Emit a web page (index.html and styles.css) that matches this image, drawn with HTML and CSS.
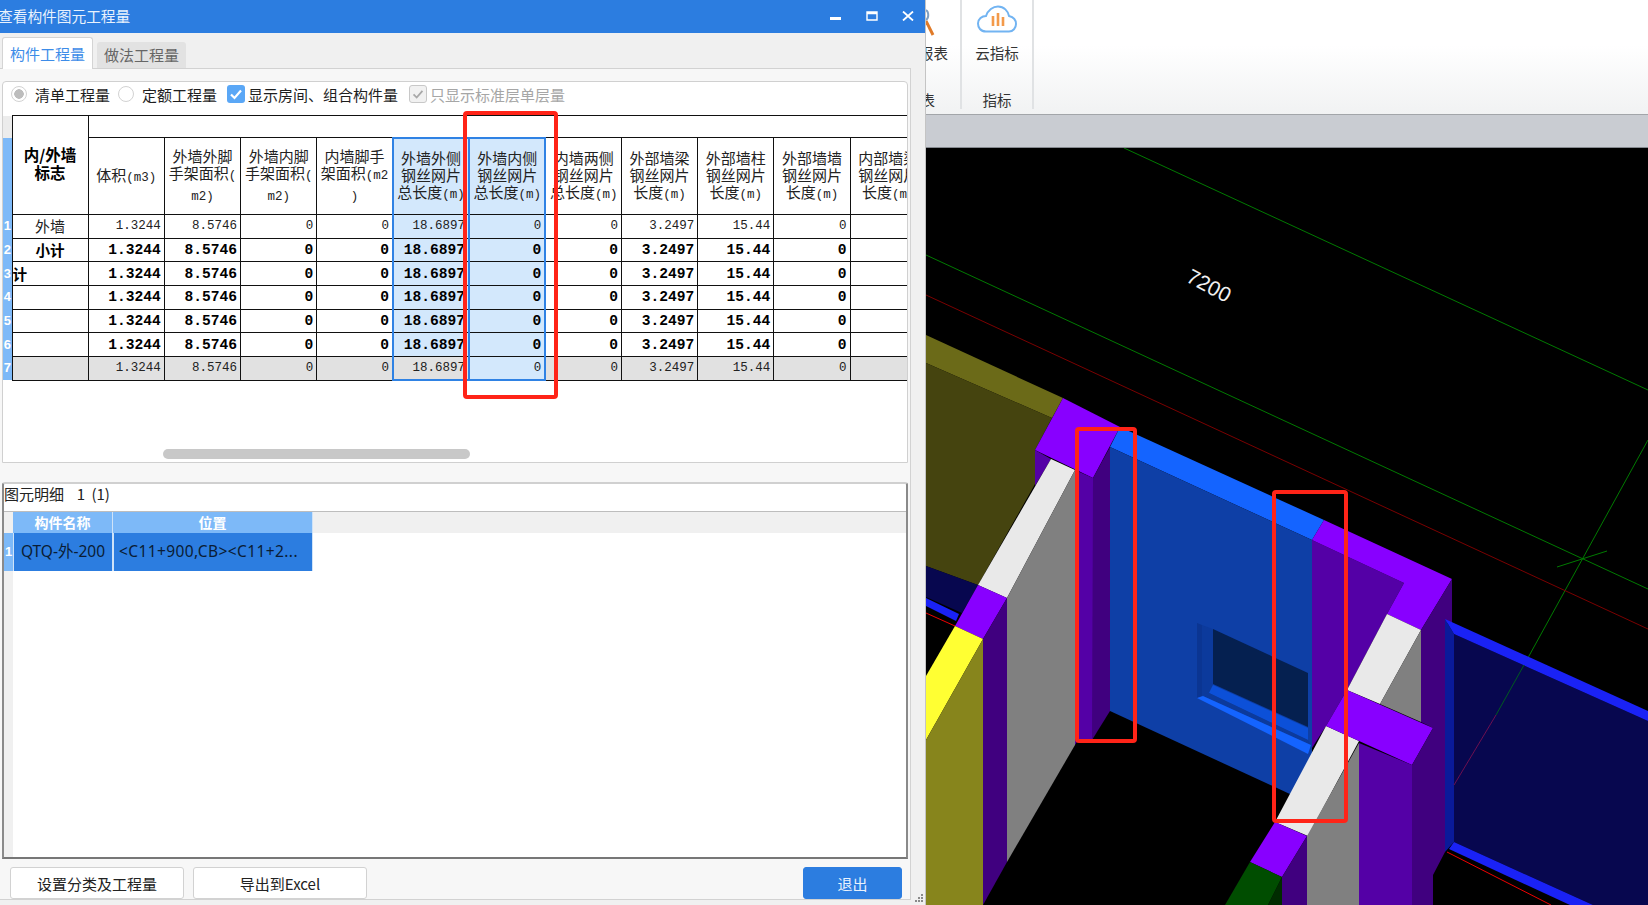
FILE: index.html
```html
<!DOCTYPE html>
<html lang="zh-CN">
<head>
<meta charset="utf-8">
<title>查看构件图元工程量</title>
<link rel="stylesheet" href="styles.css">
</head>
<body>
<div class="app">
  <section class="dialog">
    <header class="titlebar">
      <span class="title">查看构件图元工程量</span>
      <div class="winbtns">
        <svg class="winbtn" viewBox="0 0 12 10"><rect x="0" y="6" width="11" height="3" fill="#fff"/></svg>
        <svg class="winbtn" viewBox="0 0 12 10"><path d="M1 1h10v8H1z M1 2.5h10" fill="none" stroke="#fff" stroke-width="1.4"/></svg>
        <svg class="winbtn" viewBox="0 0 12 10"><path d="M1 0.5L11 9.5M11 0.5L1 9.5" fill="none" stroke="#fff" stroke-width="1.8"/></svg>
      </div>
    </header>
    <nav class="tabs">
      <div class="tab tab-on">构件工程量</div>
      <div class="tab">做法工程量</div>
    </nav>
    <div class="pane">
      <div class="group upper">
        <div class="options">
          <span class="radio radio-on"></span><span class="optlabel lab1">清单工程量</span>
          <span class="radio"></span><span class="optlabel lab2">定额工程量</span>
          <span class="check check-on"><svg viewBox="0 0 18 18"><path d="M4 9.5l3.5 3.5L14 5.5" fill="none" stroke="#fff" stroke-width="2.2"/></svg></span><span class="optlabel lab3">显示房间、组合构件量</span>
          <span class="check check-off"><svg viewBox="0 0 18 18"><path d="M4 9.5l3.5 3.5L14 5.5" fill="none" stroke="#a8a8a8" stroke-width="2"/></svg></span><span class="optlabel lab4">只显示标准层单层量</span>
        </div>
        <div class="tableclip">
          <table class="qty">
            <colgroup>
              <col class="c-num"><col class="c-col"><col class="c-col"><col class="c-col"><col class="c-col"><col class="c-col"><col class="c-col"><col class="c-col"><col class="c-col"><col class="c-col"><col class="c-col"><col class="c-col"><col class="c-col">
            </colgroup>
            <thead>
              <tr class="h1">
                <th class="num num-grey"></th>
                <th class="flag" rowspan="2">内/外墙<br>标志</th>
                <th class="blank" colspan="11"></th>
              </tr>
              <tr class="h2">
                <th class="num"></th>
                <th>体积<span class="lat">(m3)</span></th>
                <th>外墙外脚<br>手架面积<span class="lat">(</span><br><span class="lat">m2)</span></th>
                <th>外墙内脚<br>手架面积<span class="lat">(</span><br><span class="lat">m2)</span></th>
                <th>内墙脚手<br>架面积<span class="lat">(m2</span><br><span class="lat">)</span></th>
                <th class="sel">外墙外侧<br>钢丝网片<br>总长度<span class="lat">(m)</span></th>
                <th class="sel">外墙内侧<br>钢丝网片<br>总长度<span class="lat">(m)</span></th>
                <th>内墙两侧<br>钢丝网片<br>总长度<span class="lat">(m)</span></th>
                <th>外部墙梁<br>钢丝网片<br>长度<span class="lat">(m)</span></th>
                <th>外部墙柱<br>钢丝网片<br>长度<span class="lat">(m)</span></th>
                <th>外部墙墙<br>钢丝网片<br>长度<span class="lat">(m)</span></th>
                <th>内部墙梁<br>钢丝网片<br>长度<span class="lat">(m)</span></th>
              </tr>
            </thead>
            <tbody>
              <tr>
                <td class="num">1</td><td class="name">外墙</td><td>1.3244</td><td>8.5746</td><td>0</td><td>0</td><td class="sel">18.6897</td><td class="sel">0</td><td>0</td><td>3.2497</td><td>15.44</td><td>0</td><td></td>
              </tr>
              <tr class="bold">
                <td class="num">2</td><td class="name">小计</td><td>1.3244</td><td>8.5746</td><td>0</td><td>0</td><td class="sel">18.6897</td><td class="sel">0</td><td>0</td><td>3.2497</td><td>15.44</td><td>0</td><td></td>
              </tr>
              <tr class="bold">
                <td class="num">3</td><td class="name name-left">计</td><td>1.3244</td><td>8.5746</td><td>0</td><td>0</td><td class="sel">18.6897</td><td class="sel">0</td><td>0</td><td>3.2497</td><td>15.44</td><td>0</td><td></td>
              </tr>
              <tr class="bold">
                <td class="num">4</td><td class="name"></td><td>1.3244</td><td>8.5746</td><td>0</td><td>0</td><td class="sel">18.6897</td><td class="sel">0</td><td>0</td><td>3.2497</td><td>15.44</td><td>0</td><td></td>
              </tr>
              <tr class="bold">
                <td class="num">5</td><td class="name"></td><td>1.3244</td><td>8.5746</td><td>0</td><td>0</td><td class="sel">18.6897</td><td class="sel">0</td><td>0</td><td>3.2497</td><td>15.44</td><td>0</td><td></td>
              </tr>
              <tr class="bold">
                <td class="num">6</td><td class="name"></td><td>1.3244</td><td>8.5746</td><td>0</td><td>0</td><td class="sel">18.6897</td><td class="sel">0</td><td>0</td><td>3.2497</td><td>15.44</td><td>0</td><td></td>
              </tr>
              <tr class="total">
                <td class="num">7</td><td class="name"></td><td>1.3244</td><td>8.5746</td><td>0</td><td>0</td><td class="sel sel-grey">18.6897</td><td class="sel">0</td><td>0</td><td>3.2497</td><td>15.44</td><td>0</td><td></td>
              </tr>
            </tbody>
          </table>
        </div>
        <div class="hscroll"><div class="thumb"></div></div>
        <div class="redbox"></div>
      </div>
      <div class="group lower">
        <div class="lowertitle">图元明细&nbsp; 1 (1)</div>
        <div class="detail">
          <div class="d-corner"></div>
          <div class="d-head d-name">构件名称</div>
          <div class="d-head d-pos">位置</div>
          <div class="d-rest"></div>
          <div class="d-num">1</div>
          <div class="d-cell d-name">QTQ-外-200</div>
          <div class="d-cell d-pos">&lt;C11+900,CB&gt;&lt;C11+2...</div>
          <div class="d-blank"></div>
          <div class="d-strip"></div>
          <div class="d-empty"></div>
        </div>
      </div>
      <footer class="footer">
        <button class="btn btn-a">设置分类及工程量</button>
        <button class="btn btn-a">导出到Excel</button>
        <button class="btn btn-exit">退出</button>
      </footer>
    </div>
    <svg class="grip" viewBox="0 0 12 10"><path d="M9 1h2v2H9zM6 4h2v2H6zM9 4h2v2H9zM3 7h2v2H3zM6 7h2v2H6zM9 7h2v2H9z" fill="#8a8a8a"/></svg>
  </section>

  <section class="main">
    <div class="ribbon">
      <div class="rgroup rg1">
        <svg class="mag" viewBox="0 0 10 40"><path d="M0 10C3 12 3 18 0 20" fill="none" stroke="#7f9fc0" stroke-width="2"/><path d="M0 21L7 35" fill="none" stroke="#e07a28" stroke-width="3"/></svg>
        <div class="rbig rbig1">报表</div>
        <div class="rlabel rlabel1">表</div>
      </div>
      <div class="rgroup rg2">
        <svg class="cloud" viewBox="0 0 40 28">
          <path d="M9 26.5C3.5 26.5 1 22.5 1 18.5C1 14 5 11 9 11C11 5 16 1.5 21 1.5C27 1.5 31 6 32 11C36 12 39 15 39 19C39 23 36 26.5 32 26.5Z" fill="none" stroke="#72b4f2" stroke-width="2"/>
          <path d="M16 11v10M21 8v13M26 12v9" fill="none" stroke="#f39a4a" stroke-width="2.6"/>
        </svg>
        <div class="rbig">云指标</div>
        <div class="rlabel">指标</div>
      </div>
    </div>
    <div class="band"></div>
    <svg class="scene" viewBox="926 148 722 757">
      <rect class="k" x="926" y="148" width="722" height="757"/>
      <path class="ln-g" d="M1124 148L1648 390M926 255L1648 589M1648 440L1524 665M1557 567L1607 551"/>
      <path class="ln-r" d="M926 295L1648 629"/>
      <text class="dim" transform="translate(1185 281) rotate(28)">7200</text>

      <polygon class="olive-top" points="926,335 1063,398 1052,418 926,363"/>
      <polygon class="olive-dk" points="926,363 1052,418 1035,450 1035,484 978,585 926,566"/>
      <polygon class="navy" points="926,566 978,585 962,613 926,597"/>
      <polygon class="bar" points="926,598 959,614 956,621 926,606"/>
      <path class="ln-rb" d="M926 613L955 626"/>

      <polygon class="p-top" points="1063,398 1120,427 1093,478 1035,450"/>
      <polygon class="p-mid" points="1035,450 1051,459 1035,486"/>
      <polygon class="white" points="1051,459 1075,470 1007,598 978,585"/>
      <polygon class="grey" points="1075,470 1075,745 1007,862 1007,598"/>
      <polygon class="p-mid" points="1075,470 1093,478 1093,740 1078,740 1075,745"/>
      <polygon class="p-dk" points="1093,478 1110,447 1110,711 1092,740"/>
      <polygon class="p-top" points="978,585 1007,598 983,639 955,626"/>
      <polygon class="p-dk" points="983,639 1007,598 1007,862 983,905"/>
      <polygon class="yellow" points="955,626 983,639 926,740 926,676"/>
      <polygon class="olive" points="983,639 983,905 926,905 926,740"/>

      <polygon class="b-top" points="1120,427 1324,520 1312,540 1110,447"/>
      <polygon class="wall" points="1110,447 1312,540 1312,760 1292,795 1110,711"/>
      <polygon class="frame-dk" points="1197,623 1202,625 1202,696 1197,698"/>
      <polygon class="frame" points="1202,625 1213,629 1213,684 1209,693 1202,696"/>
      <polygon class="win" points="1213,629 1308,673 1308,727 1213,684"/>
      <polygon class="sill-in" points="1213,685 1308,728 1308,740 1209,693"/>
      <polygon class="frame" points="1209,693 1308,740 1311,745 1203,696"/>
      <polygon class="sill" points="1197,698 1203,696 1311,745 1308,754"/>

      <polygon class="p-mid" points="1312,540 1404,583 1387,614 1347,690 1326,726 1312,748"/>
      <polygon class="p-top" points="1324,520 1452,579 1421,630 1387,614 1404,583 1312,540"/>
      <polygon class="white" points="1387,614 1421,630 1380,704 1347,690"/>
      <polygon class="grey" points="1421,630 1421,722 1380,704"/>
      <polygon class="p-dk" points="1421,630 1452,579 1452,625 1445,622 1445,852 1433,875 1433,728 1421,722"/>

      <polygon class="navy" points="1454,634 1648,721 1648,905 1593,905 1454,842"/>
      <polygon class="fr2" points="1445,619 1454,634 1454,842 1445,852"/>
      <polygon class="bar" points="1445,619 1648,711 1648,721 1454,634"/>
      <polygon class="bar" points="1454,842 1593,905 1570,905 1449,849"/>
      <path class="ln-rb" d="M1447 852L1551 905"/>
      <path class="ln-g2" d="M1524 665L1496 715"/>
      <path class="ln-m" d="M1496 715L1454 785"/>

      <polygon class="white" points="1326,726 1359,741 1308,836 1275,822"/>
      <polygon class="p-top" points="1347,690 1433,728 1412,765 1326,726"/>
      <polygon class="grey" points="1359,743 1359,905 1307,905 1307,836"/>
      <polygon class="p-mid" points="1359,743 1412,765 1412,905 1359,905"/>
      <polygon class="p-dk" points="1412,765 1433,728 1433,905 1412,905"/>
      <polygon class="p-top" points="1275,822 1307,836 1282,877 1250,862"/>
      <polygon class="green" points="1250,862 1282,877 1268,905 1225,905"/>
      <polygon class="green-dk" points="1282,877 1282,905 1268,905"/>
      <polygon class="p-dk" points="1282,877 1307,836 1307,905 1282,905"/>

      <rect class="mark" x="1077" y="429" width="58" height="312" rx="2"/>
      <rect class="mark" x="1274" y="492" width="72" height="329" rx="2"/>
    </svg>
  </section>
</div>
</body>
</html>
```

FILE: styles.css
```css
* { box-sizing: border-box; }
html, body { margin: 0; padding: 0; }
body {
  width: 1648px;
  height: 905px;
  overflow: hidden;
  font-family: "Noto Sans CJK SC", "Liberation Sans", sans-serif;
  font-size: 15px;
  color: #222;
}
.app { display: flex; width: 1648px; height: 905px; }

/* dialog */
.dialog {
  position: relative;
  flex: 0 0 926px;
  height: 905px;
  background: #f0f0f0;
  display: flex;
  flex-direction: column;
  border-right: 1px solid #c4c4c4;
}
.titlebar {
  flex: 0 0 33px;
  background: #2c7de0;
  color: #e9f2fd;
  display: flex;
  align-items: center;
  justify-content: space-between;
}
.title { font-size: 14.7px; margin-left: -2px; margin-top: -2px; white-space: nowrap; }
.winbtns { display: flex; gap: 24px; padding-right: 11px; margin-top: -1px; }
.winbtn { width: 12px; height: 10px; display: block; }
.tabs {
  flex: 0 0 35px;
  display: flex;
  align-items: flex-end;
  gap: 4px;
  padding-left: 2px;
}
.tab {
  width: 89px;
  height: 26px;
  background: #e2e2e2;
  color: #666;
  text-align: center;
  line-height: 26px;
  border-radius: 3px 3px 0 0;
}
.tab-on {
  width: 91px;
  height: 32px;
  margin-bottom: -1px;
  line-height: 31px;
  color: #3d8ce8;
  background: #fff;
  border: 1px solid #d4d4d4;
  border-bottom: 0;
  position: relative;
}
.pane {
  flex: 0 0 832px;
  width: 911px;
  background: #f7f7f7;
  border: 1px solid #d2d2d2;
  border-left: 0;
  padding: 12px 2px 0 3px;
  display: flex;
  flex-direction: column;
}
.group { background: #fff; border: 1px solid #d0d0d0; }
.upper {
  position: relative;
  flex: 0 0 382px;
  border-radius: 4px 4px 0 0;
  margin-left: -1px;
  display: flex;
  flex-direction: column;
}
.options {
  flex: 0 0 33px;
  display: flex;
  align-items: center;
  padding-bottom: 9px;
  white-space: nowrap;
}
.radio {
  width: 16px;
  height: 16px;
  border: 1px solid #d2d2d2;
  border-radius: 50%;
  background: #fff;
  margin-left: 8px;
  flex: none;
  position: relative;
}
.radio-on { background: radial-gradient(circle, #bdbdbd 0 4.5px, #fff 5px); margin-left: 8px; }
.optlabel { color: #1e1e1e; }
.lab1 { margin-left: 8px; }
.lab2 { margin-left: 8px; }
.lab3 { margin-left: 3px; }
.lab4 { margin-left: 3px; color: #a6a6a6; }
.check {
  flex: none;
  width: 18px;
  height: 18px;
  border-radius: 3px;
  margin-left: 10px;
  display: block;
}
.check svg { display: block; width: 18px; height: 18px; }
.check-on { background: #5aa7f6; }
.check-off { background: #f1f1f1; border: 1px solid #c8c8c8; margin-left: 11px; }
.check-off svg { width: 16px; height: 16px; }

.tableclip { flex: 0 0 334px; overflow: hidden; }
.qty {
  border-collapse: collapse;
  table-layout: fixed;
  width: 924px;
  font-family: "Liberation Mono", "Noto Sans CJK SC", monospace;
}
.c-num { width: 9px; }
.c-col { width: 76.2px; }
.qty th, .qty td {
  border: 1px solid #111;
  padding: 0;
  overflow: hidden;
  white-space: nowrap;
}
.qty th {
  font-family: "Noto Sans CJK SC", sans-serif;
  font-size: 15px;
  font-weight: 400;
  line-height: 17px;
  text-align: center;
  color: #222;
}
.lat { font-family: "Liberation Mono", monospace; font-size: 12.5px; }
.qty .flag { font-weight: 700; font-size: 15.5px; padding-bottom: 4px; line-height: 18px; color: #000; }
.h1 { height: 22px; }
.h2 { height: 77px; }
.qty tbody tr { height: 23.7px; }
.qty td {
  font-size: 12.5px;
  line-height: 16px;
  text-align: right;
  padding-right: 3px;
  color: #222;
}
.qty .bold td { font-size: 14.6px; font-weight: 700; color: #000; }
.qty .name {
  font-family: "Noto Sans CJK SC", sans-serif;
  font-size: 15px;
  text-align: center;
  padding-right: 0;
}
.qty .name-left { text-align: left; }
.qty .total td { background: #e1e1e1; }
.qty th.num, .qty td.num {
  border: 0;
  background: #7db9f8;
  color: #fff;
  font-family: "Liberation Sans", sans-serif;
  font-size: 13px;
  font-weight: 700;
  text-align: center;
  padding: 0;
}
.qty th.num-grey { background: #ececec; }
.qty th.sel, .qty td.sel {
  background: #d3e8fc;
  border-left: 2px solid #2f82e4;
  border-right: 2px solid #2f82e4;
}
.qty th.sel { border-top: 2px solid #2f82e4; }
.qty .total td.sel { border-bottom: 2px solid #2f82e4; }
.qty .total td.sel-grey { background: #e1e1e1; }

.hscroll { flex: 0 0 10px; padding-left: 160px; }
.thumb { width: 307px; height: 10px; background: #c8c8c8; border-radius: 5px; }
.redbox {
  position: absolute;
  left: 460px;
  top: 29px;
  width: 95px;
  height: 288px;
  border: 4px solid #ff2418;
  border-radius: 4px;
}

.lower {
  flex: 0 0 377px;
  margin-top: 19px;
  margin-left: -1px;
  border-top: 2px solid #d0d0d0;
  border-bottom: 2px solid #777;
  border-left: 2px solid #8a8a8a;
  border-right: 2px solid #8a8a8a;
  border-radius: 3px 3px 0 0;
  display: flex;
  flex-direction: column;
}
.lowertitle {
  flex: 0 0 28px;
  line-height: 19px;
  font-size: 15px;
  white-space: nowrap;
  word-spacing: 3px;
  border-bottom: 1px solid #bdbdbd;
}
.detail {
  flex: 1;
  display: grid;
  grid-template-columns: 9px 100px 200px 1fr;
  grid-template-rows: 21px 38px 1fr;
  background: #fff;
}
.d-corner, .d-rest, .d-strip { background: #f0f0f0; }
.d-head {
  background: #7db9f8;
  color: #fff;
  font-weight: 700;
  font-size: 14px;
  text-align: center;
  line-height: 20px;
  border-right: 1px solid #cfe3f8;
}
.d-num {
  background: #7db9f8;
  color: #fff;
  font-family: "Liberation Sans", sans-serif;
  font-weight: 700;
  font-size: 13px;
  line-height: 37px;
  text-align: center;
}
.d-cell {
  background: #2c7de0;
  color: #0a1c34;
  font-family: "Noto Sans", "Noto Sans CJK SC", sans-serif;
  font-size: 15.5px;
  line-height: 36px;
  white-space: nowrap;
  overflow: hidden;
  border-right: 1px solid #cfe3f8;
  border-left: 1px solid #cfe3f8;
}
.d-cell.d-name { text-align: center; }
.d-cell.d-pos { padding-left: 5px; font-size: 15.5px; letter-spacing: 0.4px; }
.d-empty { grid-column: 2 / 5; }

.footer {
  flex: 0 0 40px;
  display: flex;
  align-items: flex-start;
  padding: 8px 6px 0 7px;
  gap: 9px;
}
.btn {
  height: 32px;
  width: 174px;
  background: #fff;
  border: 1px solid #d2d2d2;
  border-radius: 3px;
  font-family: "Noto Sans CJK SC", sans-serif;
  font-size: 15px;
  color: #222;
  padding: 0;
}
.btn-exit {
  width: 99px;
  margin-left: auto;
  background: #2c7de0;
  border-color: #2c7de0;
  color: #e9f2fd;
}
.grip { position: absolute; right: 1px; bottom: 2px; width: 12px; height: 10px; }

/* right side */
.main { flex: 1; min-width: 0; display: flex; flex-direction: column; overflow: hidden; }
.ribbon {
  flex: 0 0 115px;
  display: flex;
  background: linear-gradient(#fff 40%, #f1f2f3);
  border-bottom: 1px solid #a2a5a9;
}
.rgroup {
  position: relative;
  height: 109px;
  display: flex;
  flex-direction: column;
  align-items: center;
  border-right: 2px solid #e0e2e4;
}
.rg1 { flex: 0 0 36px; min-width: 0; align-items: flex-end; }
.rg2 { flex: 0 0 72px; min-width: 0; }
.cloud { width: 40px; height: 28px; margin-top: 5px; flex: none; }
.rbig { margin-top: 10px; font-size: 14.5px; line-height: 20px; white-space: nowrap; color: #333; }
.rbig1 { margin-top: 43px; margin-right: 12px; }
.rlabel { margin-top: 27px; font-size: 14.5px; line-height: 20px; white-space: nowrap; color: #333; }
.rlabel1 { margin-right: 25px; }
.mag { position: absolute; left: 0; top: 0; width: 10px; height: 40px; }
.band { flex: 0 0 33px; background: #c9ccd2; border-bottom: 1px solid #85898f; }
.scene { flex: 1; display: block; width: 722px; min-height: 0; }

/* scene fills */
.k { fill: #000; }
.ln-g, .ln-g2, .ln-r, .ln-rb, .ln-m { fill: none; stroke-width: 1; }
.ln-g { stroke: #007a00; }
.ln-g2 { stroke: #005a20; }
.ln-r { stroke: #7a0000; }
.ln-rb { stroke: #ee0000; }
.ln-m { stroke: #6c0f50; }
.dim { fill: #f0f0f0; font-family: "Liberation Sans", sans-serif; font-size: 21px; }
.olive-top { fill: #6b6a18; }
.olive-dk { fill: #45440f; }
.olive { fill: #87851c; }
.yellow { fill: #ffff33; }
.navy { fill: #07074f; }
.bar { fill: #1a22f5; }
.p-top { fill: #8800ff; }
.p-mid { fill: #5400a6; }
.p-dk { fill: #40007f; }
.white { fill: #e9e9e9; }
.grey { fill: #808080; }
.b-top { fill: #1464ff; }
.wall { fill: #0e3fa6; }
.frame { fill: #0c3a9c; }
.frame-dk { fill: #0b3592; }
.fr2 { fill: #0a1a9a; }
.win { fill: #052050; }
.sill { fill: #1464ff; }
.sill-in { fill: #0c50d8; }
.green { fill: #004d00; }
.green-dk { fill: #002c00; }
.mark { fill: none; stroke: #ff2418; stroke-width: 4; }
```
